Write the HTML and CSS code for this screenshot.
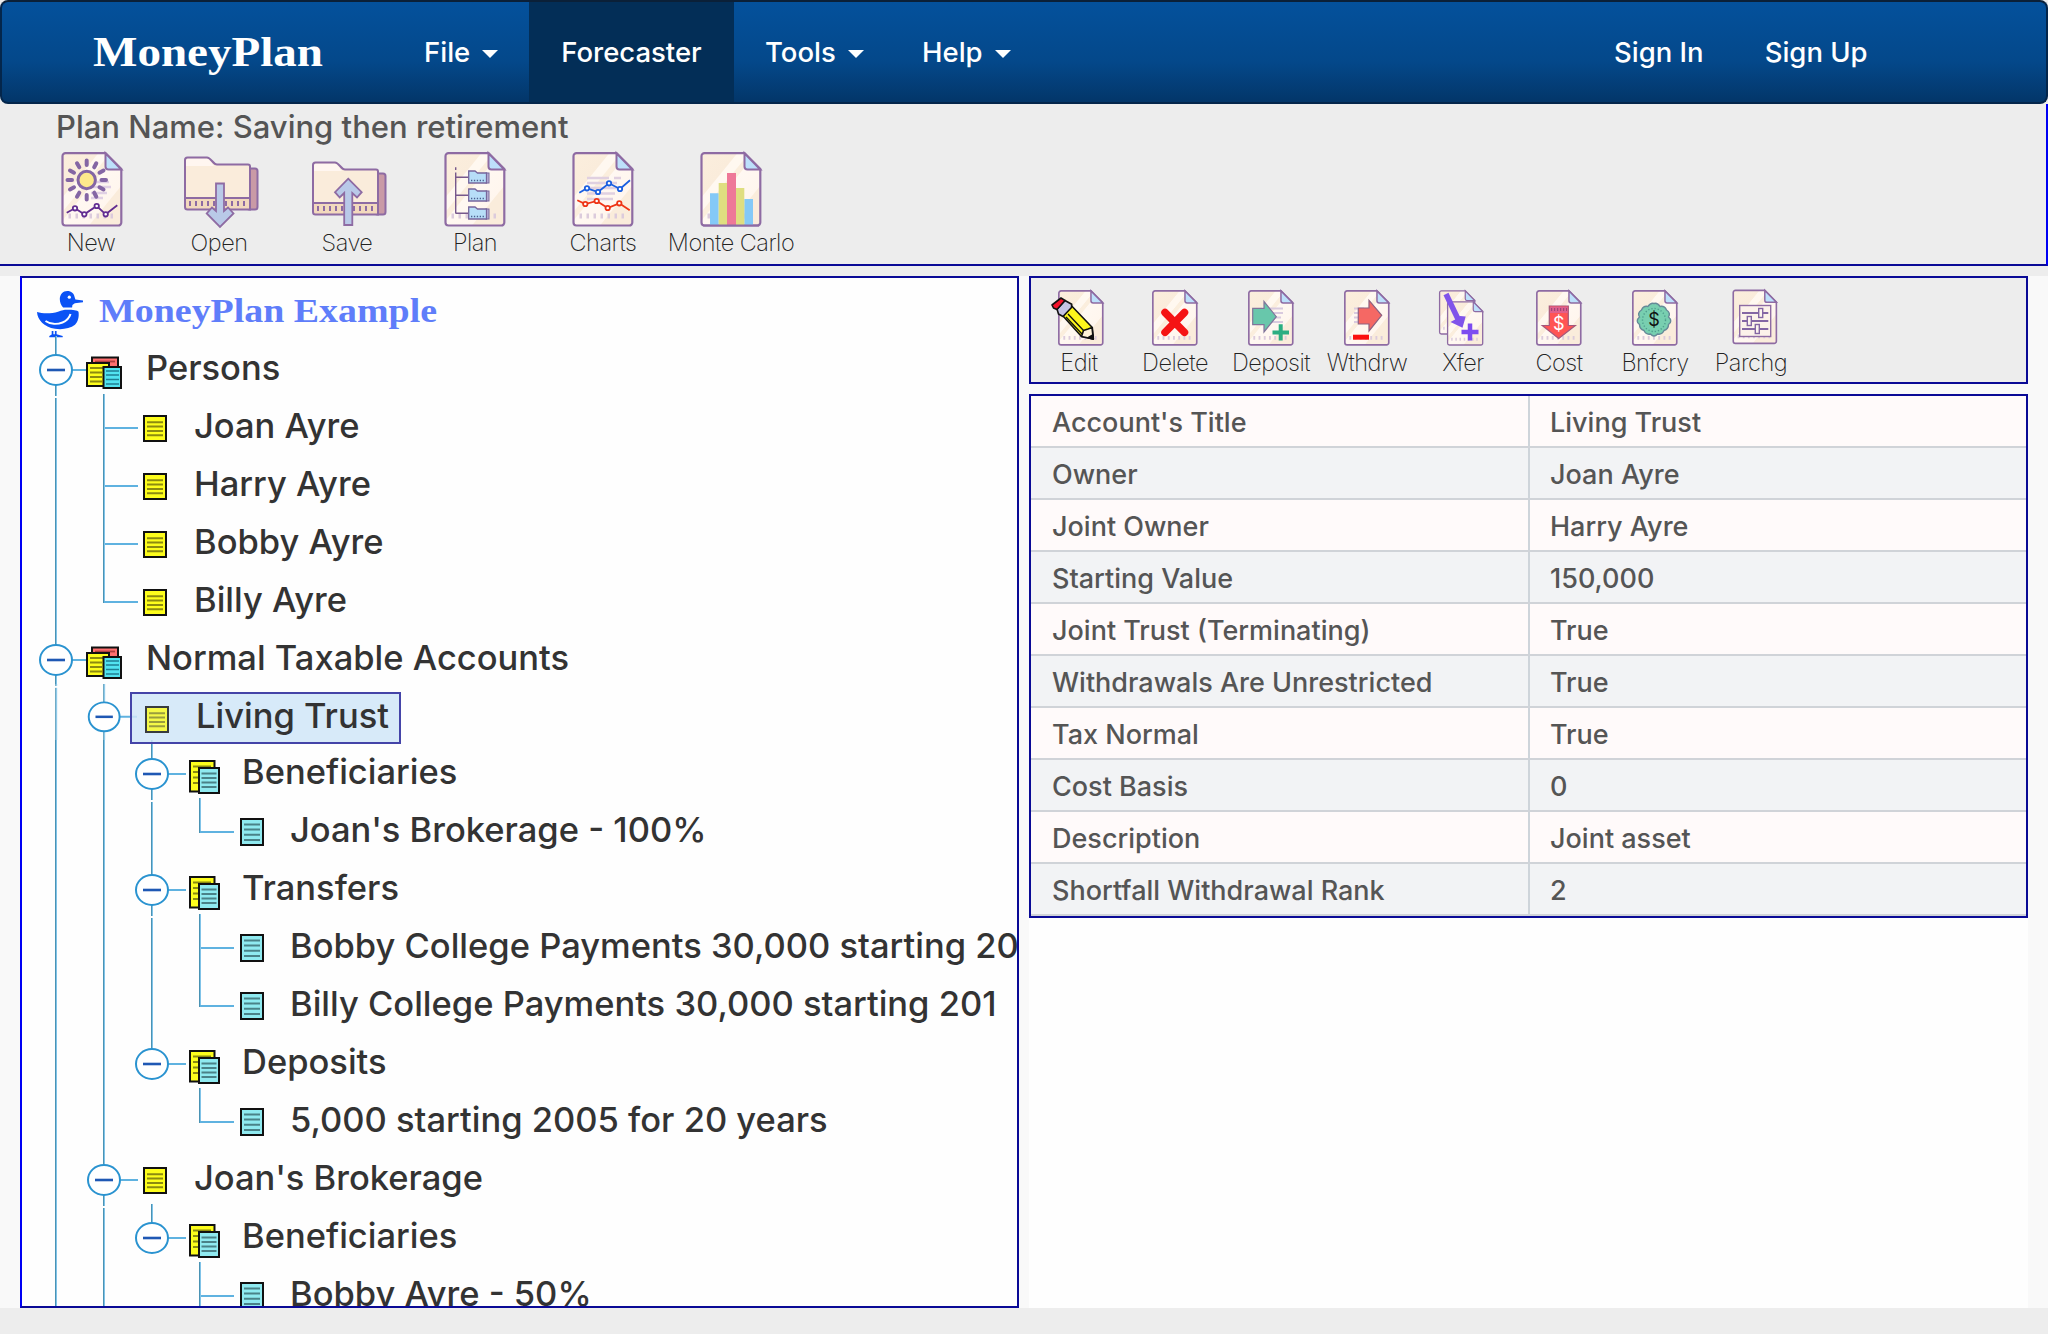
FILE: index.html
```html
<!DOCTYPE html>
<html lang="en">
<head>
<meta charset="utf-8">
<title>MoneyPlan Forecaster</title>
<link rel="stylesheet" href="styles.css">
</head>
<body>
<svg class="sprite" aria-hidden="true">
  <defs>
    <linearGradient id="paper" x1="0" y1="0" x2="1" y2="1">
      <stop offset="0" stop-color="#fbeedd"/><stop offset=".3" stop-color="#faecdb"/>
      <stop offset=".31" stop-color="#fff8f0"/><stop offset=".4" stop-color="#fff8f0"/>
      <stop offset=".41" stop-color="#fbeedd"/><stop offset=".46" stop-color="#fbeedd"/>
      <stop offset=".47" stop-color="#fff8f2"/><stop offset=".72" stop-color="#fff6ee"/>
      <stop offset=".73" stop-color="#faecdb"/><stop offset="1" stop-color="#faecdb"/>
    </linearGradient>
  </defs>
  <symbol id="doc" viewBox="0 0 62 75" overflow="visible">
    <path d="M4 1.2H44L59.8 17V70.5a3 3 0 0 1-3 3H4a3 3 0 0 1-3-3V4.2a3 3 0 0 1 3-3z" fill="url(#paper)" stroke="#8e6ba3" stroke-width="2.2"/>
    <path d="M44 1.2V14.500a3 3 0 0 0 3 3H59.800z" fill="#bde0fb" stroke="#8e6ba3" stroke-width="2"/>
    <path d="M7 64H55" stroke="#dccbdc" stroke-width="5" stroke-dasharray="2.500 4.500"/>
  </symbol>
  <symbol id="folder" viewBox="0 0 78 60" overflow="visible">
    <rect x="66" y="12.500" width="10.500" height="41" rx="2.500" fill="#c99aa6" stroke="#8e6ba3" stroke-width="2"/>
    <path d="M4 4a2.500 2.500 0 0 1 2.500-2.500H26c4 0 6 7 10 7H67a2 2 0 0 1 2 2V53.500H6.500A2.500 2.500 0 0 1 4 51z" fill="#faecdb"/>
    <path d="M5 10V4Q5 2.500 6.500 2.500H26c3 0 4 4 7 7.500z" fill="#fff6f0"/>
    <rect x="5" y="42" width="63" height="11" fill="#f3d9bd"/>
    <path d="M8 47.500H66" stroke="#8e6ba3" stroke-width="5" stroke-dasharray="2 4"/>
    <path d="M4 42H69M4 4a2.500 2.500 0 0 1 2.500-2.500H26c4 0 6 7 10 7H67a2 2 0 0 1 2 2V53.500H6.500A2.500 2.500 0 0 1 4 51z" fill="none" stroke="#8e6ba3" stroke-width="2"/>
  </symbol>
  <symbol id="mini-folder" viewBox="0 0 22 14" overflow="visible">
    <rect x="18" y="3" width="3" height="10" fill="#b9b3d8" stroke="#77669c" stroke-width="1"/>
    <path d="M.7 1H7l2.500 2H18.500V13H.7z" fill="#b7def8" stroke="#77669c" stroke-width="1.300"/>
    <path d="M3 10.500H17" stroke="#4b5f90" stroke-width="1.700" stroke-dasharray="1.300 1.600"/>
  </symbol>
  <symbol id="line" viewBox="0 0 58 58">
    <path d="M23.500 0V58" stroke="#4a93b4"/><path d="M24.500 0V58" stroke="#80c3e8"/>
  </symbol>
  <symbol id="line-gap" viewBox="0 0 58 58">
    <path d="M23.500 0V2M23.500 4V58" stroke="#4a93b4"/><path d="M24.500 0V2M24.500 4V58" stroke="#80c3e8"/>
  </symbol>
  <symbol id="tee" viewBox="0 0 58 58">
    <path d="M23.500 0V58" stroke="#4a93b4"/><path d="M24.500 0V58" stroke="#80c3e8"/>
    <path d="M25 34H58" stroke="#5fb2e0" stroke-width="2"/>
  </symbol>
  <symbol id="elbow" viewBox="0 0 58 58">
    <path d="M23.500 0V35" stroke="#4a93b4"/><path d="M24.500 0V33" stroke="#80c3e8"/>
    <path d="M24 34H58" stroke="#5fb2e0" stroke-width="2"/>
  </symbol>
  <symbol id="knob" viewBox="0 0 58 58">
    <path d="M24 34H58" stroke="#5fb2e0" stroke-width="2"/>
    <ellipse cx="24" cy="34" rx="16" ry="15" fill="#fff" stroke="#2a93d0" stroke-width="2"/>
    <path d="M15 34H33" stroke="#1f58b4" stroke-width="2.600"/>
  </symbol>
  <symbol id="toggle" viewBox="0 0 58 58"><use href="#line"/><use href="#knob"/></symbol>
  <symbol id="toggle-end" viewBox="0 0 58 58">
    <path d="M23.500 0V20" stroke="#4a93b4"/><path d="M24.500 0V20" stroke="#80c3e8"/><use href="#knob"/>
  </symbol>
  <symbol id="note" viewBox="0 0 24 27">
    <rect x="1" y="1" width="22" height="25" fill="#fdfd1c" stroke="#111" stroke-width="2"/>
    <path d="M4 7.200H20M4 11.500H20M4 15.900H20M4 20.200H20" stroke="#8c8a10" stroke-width="2"/>
  </symbol>
  <symbol id="note-cyan" viewBox="0 0 24 28">
    <rect x="1" y="1" width="22" height="26" fill="#8feaf0" stroke="#111" stroke-width="2"/>
    <path d="M4 6.500H20M4 11.500H20M4 16.700H20M4 22H20" stroke="#4a8288" stroke-width="2"/>
  </symbol>
  <symbol id="stack2" viewBox="0 0 31 34">
    <rect x="1" y="1" width="24.500" height="30.500" fill="#fdfd1c" stroke="#111" stroke-width="2"/>
    <path d="M4 6.500H22M4 12H9M4 17.500H9M4 23H9" stroke="#8c8a10" stroke-width="2.200"/>
    <rect x="10" y="8" width="20" height="25" fill="#8feaf0" stroke="#111" stroke-width="2"/>
    <path d="M12.500 13.500H27.500M12.500 18H27.500M12.500 22.500H27.500M12.500 27H27.500" stroke="#4a8288" stroke-width="1.800"/>
  </symbol>
  <symbol id="stack3" viewBox="0 0 36 33">
    <rect x="6" y="1.500" width="26" height="20" fill="#ff7070" stroke="#111" stroke-width="2"/>
    <path d="M9 5.500H29" stroke="#b04040" stroke-width="1.800"/>
    <rect x="1" y="7" width="22" height="23" fill="#fdfd1c" stroke="#111" stroke-width="2"/>
    <path d="M4 12H18M4 16.500H16M4 21H16M4 25.500H16" stroke="#8c8a10" stroke-width="1.800"/>
    <rect x="17.500" y="11" width="17.500" height="21" fill="#52e3f0" stroke="#111" stroke-width="2"/>
    <path d="M20 15H33M20 19H33M20 23.500H33M20 28H33" stroke="#1f7f92" stroke-width="1.600"/>
  </symbol>
</svg>

<nav class="navbar">
  <a class="brand"><svg width="240" height="60"><text x="1" y="44" textLength="230" lengthAdjust="spacingAndGlyphs">MoneyPlan</text></svg></a>
  <div class="menu">
    <a class="file">File<i class="caret"></i></a>
    <a class="active">Forecaster</a>
    <a class="tools">Tools<i class="caret"></i></a>
    <a class="help">Help<i class="caret"></i></a>
  </div>
  <div class="account"><a>Sign In</a><a>Sign Up</a></div>
</nav>

<header class="plan-bar">
  <h1>Plan Name: Saving then retirement</h1>
  <div class="tools-large">
    <button><svg width="76" height="76">
      <use href="#doc" x="8.500" y="0" width="62" height="75"/>
      <path d="M38 30H56M36 35H58M38 41H54M38 46H50" stroke="#e0d0e4" stroke-width="2.500"/>
      <g stroke="#8466a4" stroke-width="4" stroke-linecap="round"><path d="M33.700 8.500V13M33.700 43V47.500M14.500 28H19M48.500 28H53M24 11.300L26.300 15.300M43.300 11.300L41.200 15.300M24 44.700L26.300 40.700M43.300 44.700L41.200 40.700M17 18.500L21 20.700M50.500 18.500L46.500 20.700M17 37.500L21 35.300M50.500 37.500L46.500 35.300"/></g>
      <circle cx="33.700" cy="28" r="8.700" fill="#fde98c" stroke="#8466a4" stroke-width="3"/>
      <g fill="#fff" stroke="#622d91" stroke-width="1.800"><path d="M13.700 60.700L22 56.300L31.300 62.300L43.700 54L52.700 62.300L64.300 53.300" fill="none"/><circle cx="22" cy="56.300" r="2.200"/><circle cx="31.300" cy="62.300" r="2.200"/><circle cx="43.700" cy="54" r="2.200"/><circle cx="52.700" cy="62.300" r="2.200"/></g>
    </svg><span>New</span></button>
    <button><svg width="76" height="76">
      <use href="#folder" x="0" y="4" width="78" height="60"/>
      <path d="M35 31.500H43V59L47 55.500L52.500 61.500L39 75L25.700 61.500L31 55.500L35 59z" fill="#b9c9e8" stroke="#8e6ba3" stroke-width="1.800"/>
    </svg><span>Open</span></button>
    <button><svg width="76" height="76">
      <use href="#folder" x="0" y="9" width="78" height="60"/>
      <path d="M39.200 26.700L52.700 40.200L48 45.500L43.300 41V73H35.200V41L30.700 45.500L26 40.200z" fill="#b9c9e8" stroke="#8e6ba3" stroke-width="1.800"/>
    </svg><span>Save</span></button>
    <button><svg width="76" height="76">
      <use href="#doc" x="7.500" y="0" width="62" height="75"/>
      <path d="M18.700 15.300V18M18.700 20.500V61.500M18.700 25.300H31M18.700 43.300H31M18.700 61.300H31" stroke="#77588c" stroke-width="1.400" fill="none"/>
      <use href="#mini-folder" x="31" y="18" width="22" height="14"/><use href="#mini-folder" x="31" y="36" width="22" height="14"/><use href="#mini-folder" x="31" y="54" width="22" height="14"/>
    </svg><span>Plan</span></button>
    <button><svg width="76" height="76">
      <use href="#doc" x="7.500" y="0" width="62" height="75"/>
      <path d="M22 26H44M49 26H56M22 31H52M22 36H55M22 41.500H50M22 47H48" stroke="#e0d0e0" stroke-width="2.500"/>
      <g fill="#fff" stroke="#1b5fe0" stroke-width="1.800"><path d="M14.300 40.700L22 36.300L33 40L44 31.300L55 37L65 28.300" fill="none"/><circle cx="22" cy="36.300" r="2.200"/><circle cx="33" cy="40" r="2.200"/><circle cx="44" cy="31.300" r="2.200"/><circle cx="55" cy="37" r="2.200"/></g>
      <g fill="#fff" stroke="#ee3414" stroke-width="1.800"><path d="M12.300 48.300L20.300 52L31.700 49L42.700 56L54.300 51.300L64.700 58.300" fill="none"/><circle cx="20.300" cy="52" r="2.200"/><circle cx="31.700" cy="49" r="2.200"/><circle cx="42.700" cy="56" r="2.200"/><circle cx="54.300" cy="51.300" r="2.200"/></g>
    </svg><span>Charts</span></button>
    <button><svg width="76" height="76">
      <use href="#doc" x="7.500" y="0" width="62" height="75"/>
      <path d="M17 41.300H25.700V73H17zM51.300 47H60V73H51.300z" fill="#84c9f7"/><path d="M25.700 31H34V73H25.700zM43 36H51.300V73H43z" fill="#dfde80"/><path d="M34 21H43V73H34z" fill="#ee7898"/>
      <path d="M10 73.500H66" stroke="#8e6ba3" stroke-width="2"/>
    </svg><span>Monte Carlo</span></button>
  </div>
</header>

<main class="workspace">
  <section class="tree">
    <div class="tree-title">
      <svg class="duck" width="48" height="48" fill="#0b52f5">
        <path d="M31.300 1c4 0 6.700 2.500 7.300 6l.8 2.600 7.600.9v1.800l-8.200.9-2.400 1.900-.3 2.300-9 .2c-2-2-3.300-5-3.300-8.500C23.800 4.500 27 1 31.300 1z"/>
        <path d="M1 22c6 2 15 1.600 21-.2 4-1.400 6-2 9-2 6 .1 10.500.3 11.500 2 .8 5-.5 10-3.500 13-5 4-13 5-20 4C8 37 1.500 30 1 22z"/>
        <path d="M9.500 31c5 3.500 12 3.500 17 1.500 4-1.700 7-5 8-8.500" fill="none" stroke="#fff" stroke-width="2"/>
        <circle cx="33.300" cy="7.200" r="1.600" fill="#fff"/>
        <path d="M15.700 41h1.700v3.300h1.500V41h1.700v3.300L26.700 46v1.300H13.300V46l2.400-1.500z"/>
      </svg>
      <svg width="350" height="50"><text x="0" y="36" textLength="338" lengthAdjust="spacingAndGlyphs">MoneyPlan Example</text></svg>
    </div>
    <div class="row"><svg class="cell"><use href="#toggle"/></svg><svg class="icon i3"><use href="#stack3"/></svg><span>Persons</span></div>
    <div class="row"><svg class="cell"><use href="#line-gap"/></svg><svg class="cell"><use href="#tee"/></svg><svg class="icon i1"><use href="#note"/></svg><span>Joan Ayre</span></div>
    <div class="row"><svg class="cell"><use href="#line"/></svg><svg class="cell"><use href="#tee"/></svg><svg class="icon i1"><use href="#note"/></svg><span>Harry Ayre</span></div>
    <div class="row"><svg class="cell"><use href="#line"/></svg><svg class="cell"><use href="#tee"/></svg><svg class="icon i1"><use href="#note"/></svg><span>Bobby Ayre</span></div>
    <div class="row"><svg class="cell"><use href="#line"/></svg><svg class="cell"><use href="#elbow"/></svg><svg class="icon i1"><use href="#note"/></svg><span>Billy Ayre</span></div>
    <div class="row"><svg class="cell"><use href="#toggle"/></svg><svg class="icon i3"><use href="#stack3"/></svg><span class="normal">Normal Taxable Accounts</span></div>
    <div class="row short"><svg class="cell"><use href="#line-gap"/></svg><svg class="cell"><use href="#toggle"/></svg><div class="selected"><svg class="icon i1"><use href="#note"/></svg><span>Living Trust</span></div></div>
    <div class="row"><svg class="cell"><use href="#line"/></svg><svg class="cell"><use href="#line"/></svg><svg class="cell"><use href="#toggle"/></svg><svg class="icon i2"><use href="#stack2"/></svg><span>Beneficiaries</span></div>
    <div class="row"><svg class="cell"><use href="#line"/></svg><svg class="cell"><use href="#line"/></svg><svg class="cell"><use href="#line-gap"/></svg><svg class="cell"><use href="#elbow"/></svg><svg class="icon ic"><use href="#note-cyan"/></svg><span>Joan's Brokerage - 100%</span></div>
    <div class="row"><svg class="cell"><use href="#line"/></svg><svg class="cell"><use href="#line"/></svg><svg class="cell"><use href="#toggle"/></svg><svg class="icon i2"><use href="#stack2"/></svg><span>Transfers</span></div>
    <div class="row"><svg class="cell"><use href="#line"/></svg><svg class="cell"><use href="#line"/></svg><svg class="cell"><use href="#line-gap"/></svg><svg class="cell"><use href="#tee"/></svg><svg class="icon ic"><use href="#note-cyan"/></svg><span>Bobby College Payments 30,000 starting 20</span></div>
    <div class="row"><svg class="cell"><use href="#line"/></svg><svg class="cell"><use href="#line"/></svg><svg class="cell"><use href="#line"/></svg><svg class="cell"><use href="#elbow"/></svg><svg class="icon ic"><use href="#note-cyan"/></svg><span>Billy College Payments 30,000 starting 201</span></div>
    <div class="row"><svg class="cell"><use href="#line"/></svg><svg class="cell"><use href="#line"/></svg><svg class="cell"><use href="#toggle-end"/></svg><svg class="icon i2"><use href="#stack2"/></svg><span>Deposits</span></div>
    <div class="row"><svg class="cell"><use href="#line"/></svg><svg class="cell"><use href="#line"/></svg><svg class="cell"></svg><svg class="cell"><use href="#elbow"/></svg><svg class="icon ic"><use href="#note-cyan"/></svg><span>5,000 starting 2005 for 20 years</span></div>
    <div class="row"><svg class="cell"><use href="#line"/></svg><svg class="cell"><use href="#toggle"/></svg><svg class="icon i1"><use href="#note"/></svg><span>Joan's Brokerage</span></div>
    <div class="row"><svg class="cell"><use href="#line"/></svg><svg class="cell"><use href="#line-gap"/></svg><svg class="cell"><use href="#toggle-end"/></svg><svg class="icon i2"><use href="#stack2"/></svg><span>Beneficiaries</span></div>
    <div class="row"><svg class="cell"><use href="#line"/></svg><svg class="cell"><use href="#line"/></svg><svg class="cell"></svg><svg class="cell"><use href="#tee"/></svg><svg class="icon ic"><use href="#note-cyan"/></svg><span>Bobby Ayre - 50%</span></div>
  </section>

  <section class="side">
    <div class="tools-small">
      <button><svg width="60" height="58">
        <use href="#doc" x="9" y="1" width="46.500" height="56"/>
        <g stroke="#111" stroke-width="1.600" stroke-linejoin="round">
          <path d="M14 27L22.700 17L43.300 38.500L44.300 50L32.500 47.500z" fill="#fdf61c"/>
          <path d="M19 25L35 42M17 28L33 45" fill="none" stroke-width="1.300"/>
          <path d="M32.500 47.500L34.500 41.500L39 40L43 38.500L44.300 50z" fill="#fff3d8"/>
          <path d="M39.500 48.500L43.800 46L44.300 50z" fill="#111"/>
          <path d="M8 20L16 11.500L22.700 15.300L22.500 18.500L14 27.500L9.500 25z" fill="#c5c4e4"/>
          <path d="M3 16L12 9L16 11.500L8 20.500L4.500 19z" fill="#f4142c"/>
        </g>
      </svg><span>Edit</span></button>
      <button><svg width="60" height="58">
        <use href="#doc" x="7" y="1" width="46.500" height="56"/>
        <path d="M20 23.500L39.500 43.300M39.500 23.500L20 43.300" stroke="#f51414" stroke-width="7.500" stroke-linecap="round"/>
      </svg><span>Delete</span></button>
      <button><svg width="60" height="58">
        <use href="#doc" x="7" y="1" width="46.500" height="56"/>
        <path d="M28 19.500H42M32 24H42M33 28.500H40M31 33H42" stroke="#d9cade" stroke-width="1.800"/>
        <path d="M11.700 19.300H23V12.500L35.300 27.700L23 43V35.700H11.700z" fill="#68c7ab" stroke="#80749a" stroke-width="1.200"/>
        <path d="M39.700 35.300V51.500M31.500 43.400H48" stroke="#2bae82" stroke-width="4"/>
      </svg><span>Deposit</span></button>
      <button><svg width="60" height="58">
        <use href="#doc" x="7" y="1" width="46.500" height="56"/>
        <path d="M17 19.500H27M17 24H27M17 28.500H27M17 33H27" stroke="#d9cade" stroke-width="1.800"/>
        <path d="M21.300 19H32V11.300L44.700 26.300L32 42V35H21.300z" fill="#f56864" stroke="#8e6080" stroke-width="1.200"/>
        <path d="M16 48.200H32" stroke="#fb1010" stroke-width="5"/>
      </svg><span>Wthdrw</span></button>
      <button><svg width="60" height="58">
        <use href="#doc" x="6" y="1" width="37" height="45"/><use href="#doc" x="14" y="12" width="37" height="45"/>
        <path d="M13 5L25 30" stroke="#8054ea" stroke-width="5.500"/><path d="M17.500 33L23 30L27 27L32.700 27.500L29.500 38.700z" fill="#8054ea"/>
        <path d="M37 34.500V51.500M28.500 43H45.500" stroke="#7d4cf0" stroke-width="4.500"/>
      </svg><span>Xfer</span></button>
      <button><svg width="60" height="58">
        <use href="#doc" x="7" y="1" width="46.500" height="56"/>
        <path d="M20.300 17H39.300V36.500H46.300L29.700 49.500L13.300 36.500H20.300z" fill="#ff5454" stroke="#a4587c" stroke-width="1.200"/>
        <path d="M21 17.600H38.700V24H21z" fill="#e0608c"/><path d="M22 20.500H38" stroke="#9c4878" stroke-width="3" stroke-dasharray="1.200 1.800"/>
        <text x="29.700" y="40.500" fill="#fff">$</text>
      </svg><span>Cost</span></button>
      <button><svg width="60" height="58">
        <use href="#doc" x="7" y="1" width="46.500" height="56"/>
        <path d="M29 14.500Q32.500 13.500 35 17.500Q39.500 16.500 41.500 21Q46 24 43.500 28Q48 32 43.500 35.500Q43.500 40 39 41.500Q37 46 32.500 45Q29 49 25.500 45Q21 46 19 41.500Q14.500 40 14.500 35.500Q10 32 14.500 28Q12 24 16.500 21Q18.500 16.500 23 17.500Q25.500 13.500 29 14.500z" fill="#78cfb0" stroke="#668a98" stroke-width="1.400"/>
        <circle cx="29" cy="31" r="11.500" fill="none" stroke="#4d9c8c" stroke-width="1.400" stroke-dasharray="1.200 2"/>
        <text x="29" y="37" fill="#111">$</text>
      </svg><span>Bnfcry</span></button>
      <button><svg width="60" height="58">
        <use href="#doc" x="11" y="0.500" width="46.500" height="55"/>
        <rect x="18.700" y="16.500" width="31" height="31" fill="#fcf2ea" stroke="#8e6ba3" stroke-width="1.400"/>
        <path d="M21 24H47.300M21 32H47.300M21 40H47.300" stroke="#8466a4" stroke-width="1.800"/>
        <g fill="#fdf4ee" stroke="#8466a4" stroke-width="1.400"><rect x="37.700" y="19.500" width="4" height="9"/><rect x="26.300" y="27.500" width="4" height="9"/><rect x="34.300" y="35.500" width="4" height="9"/></g>
      </svg><span>Parchg</span></button>
    </div>
    <dl class="details">
      <dt>Account's Title</dt><dd>Living Trust</dd>
      <dt>Owner</dt><dd>Joan Ayre</dd>
      <dt>Joint Owner</dt><dd>Harry Ayre</dd>
      <dt>Starting Value</dt><dd>150,000</dd>
      <dt>Joint Trust (Terminating)</dt><dd>True</dd>
      <dt>Withdrawals Are Unrestricted</dt><dd>True</dd>
      <dt>Tax Normal</dt><dd>True</dd>
      <dt>Cost Basis</dt><dd>0</dd>
      <dt>Description</dt><dd>Joint asset</dd>
      <dt>Shortfall Withdrawal Rank</dt><dd>2</dd>
    </dl>
    <div class="blank"></div>
  </section>
</main>
</body>
</html>
```
FILE: styles.css
```css
* { box-sizing: border-box; }
body {
  margin: 0;
  width: 2048px;
  height: 1334px;
  overflow: hidden;
  background: #ededed;
  font-family: Inter, "Liberation Sans", sans-serif;
  font-weight: 500;
  color: #333;
}
svg { display: block; flex: none; overflow: visible; }
.sprite { width: 0; height: 0; position: absolute; }

/* top navigation */
.navbar {
  display: flex;
  height: 104px;
  padding-left: 90px;
  border: 2px solid #04264b;
  border-top-color: #0b2038;
  border-radius: 8px;
  background: linear-gradient(#04519c, #04488a 60%, #033669);
  color: #fff;
  font-size: 27.5px;
  line-height: 100px;
}
.brand { width: 309px; padding-top: 20px; }
.brand text { font: bold 42px "Liberation Serif", serif; fill: #fff; }
.menu { display: flex; width: 1213px; }
.menu a { display: flex; align-items: center; }
.file { width: 128px; padding-left: 23px; }
.menu .active { width: 205px; justify-content: center; background: #032e57; }
.tools { width: 158px; padding-left: 31px; }
.help { padding-left: 30px; }
.caret {
  margin: 4px 0 0 12px;
  border: 8px solid transparent;
  border-top-color: #fff;
  border-bottom: 0;
}
.account { display: flex; gap: 61px; }

/* plan header */
.plan-bar {
  height: 162px;
  padding-left: 27px;
  border: solid #0a0a96;
  border-width: 0 2px 2px 0;
  border-right-color: #0000f4;
}
.plan-bar h1 {
  margin: 0;
  height: 48px;
  padding-left: 29px;
  font-size: 31px;
  line-height: 46px;
  font-weight: 500;
  color: #555;
}
button {
  display: flex;
  flex-direction: column;
  align-items: center;
  padding: 0;
  border: 0;
  background: none;
  font: 200 23.5px/28px Inter, sans-serif;
  letter-spacing: -0.5px;
  color: #222;
  white-space: nowrap;
}
.tools-large { display: flex; }
.tools-large button { width: 128px; }
.tools-large span { margin-top: 1px; }

/* two-pane workspace */
.workspace {
  display: grid;
  grid-template-columns: 999px 999px;
  gap: 10px;
  height: 1032px;
  margin-top: 10px;
  padding: 0 20px;
  background: #f9f9f9;
}
.tree, .tools-small, .details { border: 2px solid #0a0a96; }
.tree {
  height: 1032px;
  overflow: hidden;
  padding-left: 10px;
  background: #fefefe;
  border-left-color: #0000f4;
}
.tree-title { display: flex; height: 58px; padding: 12px 0 0 4px; }
.tree-title text { font: bold 34px "Liberation Serif", serif; fill: #5f7dfa; }
.duck { margin-right: 15px; }
.tree-title svg + svg { margin-top: -4px; }
.row {
  display: flex;
  height: 58px;
  font-size: 34.5px;
  line-height: 63px;
  white-space: nowrap;
}
.short { height: 56px; }
.cell { width: 58px; height: 58px; margin-right: -10px; }
.short .cell { overflow: hidden; height: 56px; }
.short .cell use { width: 58px; height: 58px; }
.icon { position: relative; }
.i1 { width: 24px; height: 27px; margin: 21px 27px 0 15px; }
.i2 { width: 31px; height: 34px; margin: 20px 22px 0 13px; }
.i3 { width: 36px; height: 33px; margin: 20px 24px 0 6px; }
.ic { width: 24px; height: 28px; margin: 20px 26px 0 16px; }
.selected {
  display: flex;
  position: relative;
  width: 271px;
  height: 52px;
  margin: 8px 0 0 2px;
  border: 2px solid #4444a8;
  background: rgba(208, 230, 248, .85);
  line-height: 43px;
}
.selected .i1 { margin: 12px 27px 0 13px; opacity: .8; }

/* account pane */
.side { display: flex; flex-direction: column; }
.tools-small {
  display: flex;
  height: 108px;
  padding: 11px 0 0;
  background: #ededed;
}
.tools-small button { width: 96px; }
.tools-small span { margin-top: 2px; }
.tools-small text { font: 18px Inter, sans-serif; text-anchor: middle; letter-spacing: 0; }
.details {
  display: grid;
  grid-template-columns: 499px 496px;
  grid-auto-rows: 52px;
  margin: 10px 0 0;
  font-size: 27px;
  line-height: 53px;
  color: #555;
}
dt, dd {
  margin: 0;
  border-bottom: 2px solid #d0d3d8;
  background: #fffafa;
}
dt { padding-left: 21px; border-right: 2px solid #ced4da; }
dd { padding-left: 20px; }
dt:nth-of-type(even), dd:nth-of-type(even) { background: #f2f3f5; }
.blank { flex: 1; background: #fefefe; }
```
